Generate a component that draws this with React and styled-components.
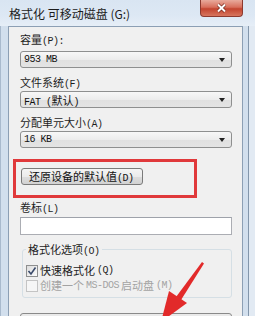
import React from "react";
import styled, { createGlobalStyle } from "styled-components";

const GlobalStyle = createGlobalStyle`
  html, body {
    margin: 0;
    padding: 0;
    background: #ffffff;
    overflow: hidden;
  }
  body {
    font-family: "Noto Sans CJK SC", "Noto Sans", sans-serif;
  }
`;

const Frame = styled.div`
  position: relative;
  width: 255px;
  height: 316px;
  overflow: hidden;
  display: flex;
  flex-direction: column;
  background: linear-gradient(
    90deg,
    #a9bacd 0 1px,
    #d2dfed 1px 248px,
    #8396ab 248px 249px,
    #e2eaf3 249px
  );
`;

const TitleBar = styled.div`
  height: 26px;
  flex-shrink: 0;
  display: flex;
  justify-content: space-between;
  align-items: flex-start;
  background: linear-gradient(#d9e5f2, #dde8f4 60%, #e6eef7);
`;

const Title = styled.span`
  margin: 6px 0 0 9px;
  font-size: 12px;
  line-height: 16px;
  color: #1c1c1c;
`;

const CloseButton = styled.div`
  width: 43px;
  height: 17px;
  margin-right: 12px;
  box-sizing: border-box;
  border: 1px solid #8d3a2f;
  border-top: none;
  border-radius: 0 0 4px 4px;
  background: linear-gradient(#e8aa9c, #d86f5c 45%, #c3442f 55%, #d7765f);
  display: flex;
  align-items: center;
  justify-content: center;
`;

const Client = styled.div`
  flex: 1;
  box-sizing: border-box;
  width: 235px;
  margin-left: 8px;
  background: #f0f0f0;
  border: 1px solid #8c9fb4;
  border-bottom: none;
  padding: 5px 10px 0 11px;
  display: flex;
  flex-direction: column;
`;

const Label = styled.div`
  height: 14px;
  line-height: 14px;
  font-size: 11px;
  color: #1e1e1e;
  margin-bottom: ${(p) => p.$gap}px;
  white-space: nowrap;
`;

const Lat = styled.span`
  font-family: "Liberation Mono", monospace;
  font-size: 10px;
  letter-spacing: -0.5px;
`;

const Select = styled.div`
  height: 17px;
  box-sizing: border-box;
  border: 1px solid #8e8f8f;
  border-radius: 3px;
  background: linear-gradient(#f7f7f7, #ececec 50%, #e0e0e0 51%, #e4e4e4);
  display: flex;
  align-items: center;
  justify-content: space-between;
  padding: 0 6px 0 3px;
  margin-bottom: 7px;
  font-size: 11px;
  color: #111;
`;

const Caret = styled.span`
  width: 0;
  height: 0;
  border-left: 3.5px solid transparent;
  border-right: 3.5px solid transparent;
  border-top: 4px solid #222;
`;

const RedBox = styled.div`
  width: 184px;
  height: 39px;
  box-sizing: border-box;
  margin: 4px 0 2px -7px;
  border: 3px solid #e0393b;
  padding: 6px 0 0 5px;
`;

const Button = styled.div`
  width: 122px;
  height: 17px;
  box-sizing: border-box;
  border: 1px solid #7a7a7a;
  border-radius: 3px;
  background: linear-gradient(#f4f4f4, #ebebeb 50%, #dddddd 51%, #d2d2d2);
  padding-left: 7px;
  font-size: 11px;
  line-height: 15px;
  color: #111;
  white-space: nowrap;
`;

const TextBox = styled.div`
  height: 18px;
  box-sizing: border-box;
  border: 1px solid #abadb3;
  border-top-color: #9ea2aa;
  background: #ffffff;
`;

const Group = styled.fieldset`
  margin: 7px 0 0 2px;
  width: 210px;
  box-sizing: border-box;
  border: 1px solid #d5dfe5;
  border-radius: 3px;
  padding: 8px 0 5px 3px;
  display: flex;
  flex-direction: column;
  gap: 2px;
`;

const Legend = styled.legend`
  padding: 0 2px;
  height: 14px;
  line-height: 14px;
  font-size: 11px;
  color: #1e1e1e;
`;

const CheckRow = styled.div`
  height: 13px;
  display: flex;
  align-items: center;
  gap: 2px;
  font-size: 11px;
  line-height: 13px;
  color: ${(p) => (p.$disabled ? "#a3a3a3" : "#1e1e1e")};
  white-space: nowrap;
`;

const Box = styled.span`
  width: 12px;
  height: 12px;
  box-sizing: border-box;
  border: 1px solid ${(p) => (p.$disabled ? "#c4c4c4" : "#8e8f8f")};
  background: ${(p) =>
    p.$disabled ? "#f6f6f6" : "linear-gradient(135deg, #dcdcdc, #fbfbfb)"};
  display: flex;
  align-items: center;
  justify-content: center;
`;

const BottomButton = styled.div`
  margin-top: 15px;
  height: 20px;
  box-sizing: border-box;
  border: 1px solid #8a8a8a;
  border-radius: 3px;
  background: #eaeaea;
`;

const Overlay = styled.svg`
  position: absolute;
  left: 0;
  top: 0;
  pointer-events: none;
`;

const Check = () => (
  <svg width="10" height="10" viewBox="0 0 10 10">
    <path d="M1.5 5 L4 8 L8.5 1.5" fill="none" stroke="#3a4a6a" strokeWidth="1.6" />
  </svg>
);

export default function App() {
  return (
    <>
      <GlobalStyle />
      <Frame>
        <TitleBar>
          <Title>格式化 可移动磁盘 (G:)</Title>
          <CloseButton>
            <svg width="11" height="10" viewBox="0 0 11 10">
              <path d="M2 1.5 L9 8.5 M9 1.5 L2 8.5" stroke="#6e2418" strokeWidth="3.2" />
              <path d="M2 1.5 L9 8.5 M9 1.5 L2 8.5" stroke="#ffffff" strokeWidth="2" />
            </svg>
          </CloseButton>
        </TitleBar>
        <Client>
          <Label $gap={5}>
            容量<Lat>(P):</Lat>
          </Label>
          <Select>
            <Lat>953 MB</Lat>
            <Caret />
          </Select>
          <Label $gap={2}>
            文件系统<Lat>(F)</Lat>
          </Label>
          <Select>
            <span>
              <Lat>FAT (</Lat>默认<Lat>)</Lat>
            </span>
            <Caret />
          </Select>
          <Label $gap={2}>
            分配单元大小<Lat>(A)</Lat>
          </Label>
          <Select>
            <Lat>16 KB</Lat>
            <Caret />
          </Select>
          <RedBox>
            <Button>
              还原设备的默认值<Lat>(D)</Lat>
            </Button>
          </RedBox>
          <Label $gap={3}>
            卷标<Lat>(L)</Lat>
          </Label>
          <TextBox />
          <Group>
            <Legend>
              格式化选项<Lat>(O)</Lat>
            </Legend>
            <CheckRow>
              <Box>
                <Check />
              </Box>
              快速格式化<Lat>(Q)</Lat>
            </CheckRow>
            <CheckRow $disabled>
              <Box $disabled />
              创建一个 <Lat>MS-DOS </Lat>启动盘<Lat>(M)</Lat>
            </CheckRow>
          </Group>
          <BottomButton />
        </Client>
        <Overlay width="255" height="316" viewBox="0 0 255 316">
          <polygon points="202,262 204,263.5 181,300 176,297" fill="#e22a2a" />
          <polygon points="169,291 187,303 161,322" fill="#e22a2a" />
        </Overlay>
      </Frame>
    </>
  );
}
